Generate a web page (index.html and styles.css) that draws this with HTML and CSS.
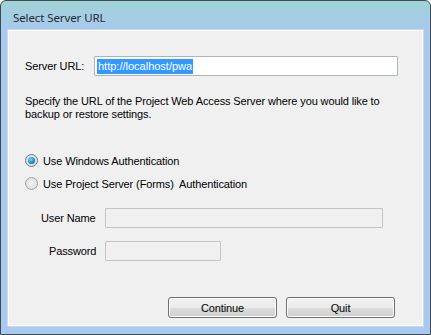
FILE: index.html
```html
<!DOCTYPE html>
<html>
<head>
<meta charset="utf-8">
<link rel="stylesheet" href="styles.css">
</head>
<body>
<div class="window">
  <div class="titlebar"><span class="title">Select Server URL</span></div>
  <div class="client">
    <div class="url-row">
      <span class="url-label">Server URL:</span>
      <div class="textbox url-box"><span class="sel">http://localhost/pwa</span></div>
    </div>
    <p class="desc">Specify the URL of the Project Web Access Server where you would like to<br>backup or restore settings.</p>
    <div class="radios">
      <div class="radio-row"><span class="radio checked"></span><span>Use Windows Authentication</span></div>
      <div class="radio-row"><span class="radio"></span><span>Use Project Server (Forms)&nbsp; Authentication</span></div>
    </div>
    <div class="cred">
      <span class="cred-label">User Name</span>
      <div class="textbox disabled user-box"></div>
      <span class="cred-label pw">Password</span>
      <div class="textbox disabled pw-box"></div>
    </div>
    <div class="buttons">
      <div class="btn">Continue</div>
      <div class="btn">Quit</div>
    </div>
  </div>
</div>
</body>
</html>
```

FILE: styles.css
```css
html, body {
  margin: 0;
  padding: 0;
  background: #ffffff;
}
.window {
  width: 431px;
  height: 335px;
  box-sizing: border-box;
  border: 1px solid #3d4a58;
  border-radius: 6px 6px 0 0;
  background: linear-gradient(to bottom, #9fd3d6 0px, #a7cbe9 22px, #a9c9ef 40px, #a9c9ef 100%);
  padding: 0 7px 8px 7px;
  display: flex;
  flex-direction: column;
  font-family: "Liberation Sans", Arial, sans-serif;
  font-size: 11px;
  letter-spacing: -0.12px;
  color: #000;
}
.titlebar {
  height: 29px;
  flex: none;
  display: flex;
  align-items: center;
  padding-left: 5px;
  box-sizing: border-box;
  padding-top: 4px;
}
.title {
  font-family: "Noto Sans", "Open Sans", sans-serif;
  font-size: 11.5px;
  color: #1e2a36;
  letter-spacing: -0.1px;
}
.client {
  flex: 1;
  background: #f0f0f0;
  border: 1px solid #fbfbfb;
  box-shadow: 0 0 0 1px #c7dcf3;
  padding: 0 0 0 16px;
  display: flex;
  flex-direction: column;
}
.url-row {
  display: flex;
  align-items: center;
  margin-top: 25px;
  height: 20px;
}
.url-label {
  width: 69px;
}
.textbox {
  box-sizing: border-box;
  height: 20px;
  border: 1px solid #abb3bd;
  background: #ffffff;
  border-radius: 1px;
}
.url-box {
  width: 304px;
  display: flex;
  align-items: center;
  padding-left: 2px;
}
.sel {
  background: #3399ff;
  color: #ffffff;
  line-height: 15px;
  padding: 0 1px;
  letter-spacing: 0;
}
.desc {
  margin: 19px 0 0 0;
  line-height: 13px;
}
.radios {
  margin-top: 33px;
  display: flex;
  flex-direction: column;
  gap: 10px;
}
.radio-row {
  display: flex;
  align-items: center;
  height: 13px;
}
.radio {
  width: 11px;
  height: 11px;
  border-radius: 50%;
  border: 1px solid #a0a4a8;
  background: radial-gradient(circle at 50% 45%, #f4f4f4 0, #dedede 70%);
  margin-right: 5px;
  position: relative;
  flex: none;
}
.radio.checked {
  border-color: #5e7894;
}
.radio.checked::after {
  content: "";
  position: absolute;
  left: 2px;
  top: 2px;
  width: 7px;
  height: 7px;
  border-radius: 50%;
  background: radial-gradient(circle at 40% 35%, #7fd3f7 0, #1a8fc9 55%, #0d4d85 100%);
}
.cred {
  margin-top: 18px;
  display: grid;
  grid-template-columns: 64px auto;
  row-gap: 13px;
  align-items: center;
  margin-left: 16px;
}
.cred-label {
  justify-self: start;
}
.cred-label.pw {
  padding-left: 8px;
}
.textbox.disabled {
  background: #f0f0f0;
  border-color: #c4c4c4;
}
.user-box {
  width: 278px;
}
.pw-box {
  width: 116px;
}
.buttons {
  margin-top: 36px;
  display: flex;
  gap: 9px;
  padding-left: 143px;
}
.btn {
  box-sizing: border-box;
  width: 109px;
  height: 21px;
  border: 1px solid #707070;
  border-radius: 3px;
  background: linear-gradient(to bottom, #f2f2f2 0%, #ebebeb 50%, #dddddd 51%, #cfcfcf 100%);
  box-shadow: inset 0 0 0 1px #fcfcfc;
  display: flex;
  align-items: center;
  justify-content: center;
}
```
